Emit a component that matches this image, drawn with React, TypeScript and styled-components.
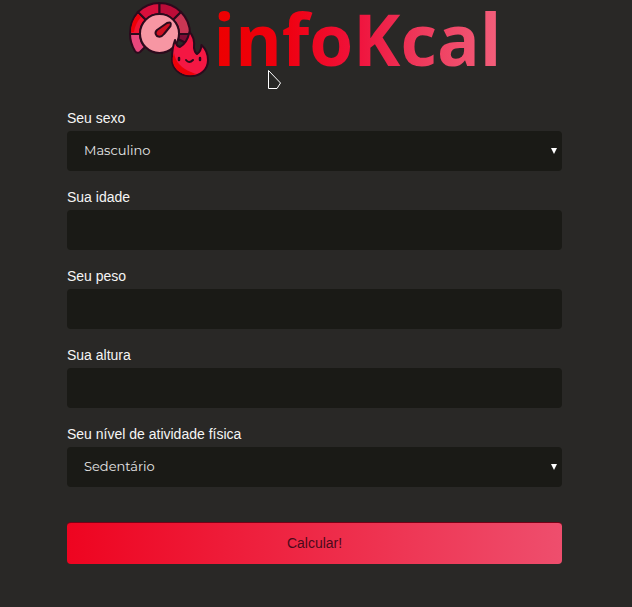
import React from "react";
import styled, { createGlobalStyle } from "styled-components";

const GlobalStyle = createGlobalStyle`
  * { box-sizing: border-box; }
  body {
    margin: 0;
    background: #292826;
    color: #f5f5f5;
    font-family: "Liberation Sans", Arial, sans-serif;
  }
`;

const Page = styled.main`
  min-height: 100vh;
  padding: 0 70px 42px 67px;
  position: relative;
`;

const Brand = styled.header`
  display: flex;
  justify-content: center;
  align-items: flex-start;
  gap: 2px;
  height: 110px;
`;

const Mark = styled.svg`
  flex: none;
  width: 84px;
  height: 80px;
`;

const Wordmark = styled.h1`
  margin: 0;
  font: 700 71px/78px "Open Sans", "Noto Sans", sans-serif;
  color: transparent;
  background: linear-gradient(90deg, #ed0000 0%, #ef0010 25%, #f0133d 50%, #ee3a5c 72%, #f3607c 100%);
  background-clip: text;
  -webkit-background-clip: text;
`;

const Form = styled.form`
  display: flex;
  flex-direction: column;
  gap: 18px;
`;

const Field = styled.div`
  display: flex;
  flex-direction: column;
  gap: 4px;
`;

const Label = styled.label`
  font-size: 14px;
  line-height: 17px;
`;

const Input = styled.input`
  width: 100%;
  height: 40px;
  padding: 0 17px 2px;
  border: 0;
  border-radius: 4px;
  background: #1a1a16;
  color: #e6e6e6;
  font: 13px Montserrat, Inter, sans-serif;
`;

const SelectBox = styled.div`
  position: relative;
`;

const Select = styled(Input).attrs({ as: "select" })`
  display: block;
  appearance: none;
`;

const Arrow = styled.svg`
  position: absolute;
  right: 4px;
  top: 17px;
  width: 8px;
  height: 6px;
  pointer-events: none;
`;

const Submit = styled.button`
  margin-top: 17px;
  height: 42px;
  padding: 0 0 2px;
  border: 0;
  border-top: 1px solid #760016;
  border-radius: 4px;
  background: linear-gradient(90deg, #ee0420, #ee4e6d);
  color: #4a0a1a;
  font: 14px "Liberation Sans", Arial, sans-serif;
`;

const Pointer = styled.svg`
  position: absolute;
  left: 267px;
  top: 69px;
  width: 16px;
  height: 22px;
`;

function LogoMark() {
  return (
    <Mark viewBox="130 0 84 80" aria-hidden="true">
      <g stroke="#2b0a1c" strokeWidth="2" strokeLinejoin="round" strokeLinecap="round">
        <path d="M132 34H142Q142 42 147 47L142 52Q139 54 137 51Q132 43 132 34Z" fill="#e8467c" />
        <path d="M132 34Q132 21 140 12L148 20Q142 26 142 34Z" fill="#f01232" />
        <path d="M133 32Q133 21 140 14L143 17Q137 24 136 32Z" fill="#ed0008" stroke="none" />
        <path d="M140 12Q149 3 161.500 3V14Q154 14 148 20Z" fill="#d80f3c" />
        <path d="M161.500 3Q174 3 183 12L175 20Q169 14 161.500 14Z" fill="#bd0c38" />
        <path d="M183 12Q192 21 192 34H181Q181 26 175 20Z" fill="#c93654" />
        <path d="M192 34Q192 40 190 44L180 39L181 34Z" fill="#7c0d35" />
        <circle cx="161.500" cy="33.500" r="19.500" fill="#f796a3" />
        <path d="M159 30L169 23Q174 21 172.500 26L166 34Q163 38 159 36Q156 33 159 30Z" fill="#ce1021" />
        <path d="M177 40Q178 46 182 47Q189 43 191.500 32Q197 37 196 48Q197 53 199 54Q203 52 203.500 45Q210 51 210 60C210 70 202 76 193 76C182 76 174 69 174 59Q174 48 177 40Z" fill="#f41743" />
        <path d="M176 53Q178 66 193 72Q197 74 199 74Q188 78 179 70Q172 63 176 53Z" fill="#ed0008" stroke="none" />
        <path d="M181 58V60M202 58V60" strokeWidth="2.500" />
        <path d="M188 60Q191 64 195 60" fill="none" />
      </g>
    </Mark>
  );
}

function Choice({ id, label, options }: { id: string; label: string; options: string[] }) {
  return (
    <Field>
      <Label htmlFor={id}>{label}</Label>
      <SelectBox>
        <Select id={id}>
          {options.map((option) => <option key={option}>{option}</option>)}
        </Select>
        <Arrow viewBox="0 0 8 6" aria-hidden="true"><path d="M1 0H7L4 6Z" fill="#fff" /></Arrow>
      </SelectBox>
    </Field>
  );
}

function NumberField({ id, label }: { id: string; label: string }) {
  return (
    <Field>
      <Label htmlFor={id}>{label}</Label>
      <Input id={id} inputMode="decimal" />
    </Field>
  );
}

export default function App() {
  return (
    <Page>
      <GlobalStyle />
      <Brand>
        <LogoMark />
        <Wordmark>infoKcal</Wordmark>
      </Brand>
      <Form onSubmit={(event: React.FormEvent) => event.preventDefault()}>
        <Choice id="sexo" label="Seu sexo" options={["Masculino", "Feminino"]} />
        <NumberField id="idade" label="Sua idade" />
        <NumberField id="peso" label="Seu peso" />
        <NumberField id="altura" label="Sua altura" />
        <Choice id="atividade" label="Seu nível de atividade física" options={["Sedentário"]} />
        <Submit type="submit">Calcular!</Submit>
      </Form>
      <Pointer viewBox="0 0 16 22" aria-hidden="true">
        <path d="M1.500 1.500V19.500H10L13.500 14Z" fill="#272725" stroke="#fff" />
      </Pointer>
    </Page>
  );
}
